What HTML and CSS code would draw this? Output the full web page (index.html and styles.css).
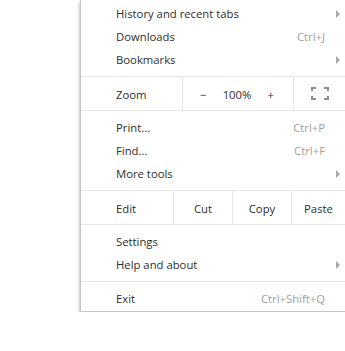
FILE: index.html
```html
<!DOCTYPE html>
<html lang="en">
<head>
    <meta charset="UTF-8">
    <title>Menu</title>
    <link rel="stylesheet" href="styles.css">
</head>
<body>
    <div class="menu">
        <div class="section first">
            <div class="item"><span>History and recent tabs</span><span></span><span class="arrow"></span></div>
            <div class="item"><span>Downloads</span><span class="key">Ctrl+J</span><span></span></div>
            <div class="item"><span>Bookmarks</span><span></span><span class="arrow"></span></div>
        </div>

        <div class="row zoom">
            <div class="label">Zoom</div>
            <div class="cell controls">
                <span>&minus;</span>
                <span>100%</span>
                <span>+</span>
            </div>
            <div class="cell">
                <svg width="18" height="13" viewBox="0 0 18 13">
                    <path d="M1 4V1h4M13 1h4v3M17 9v3h-4M5 12H1V9" fill="none" stroke="#8f8f8f" stroke-width="2"/>
                </svg>
            </div>
        </div>

        <div class="section">
            <div class="item"><span>Print...</span><span class="key">Ctrl+P</span><span></span></div>
            <div class="item"><span>Find...</span><span class="key">Ctrl+F</span><span></span></div>
            <div class="item"><span>More tools</span><span></span><span class="arrow"></span></div>
        </div>

        <div class="row edit">
            <div class="label">Edit</div>
            <div class="cell">Cut</div>
            <div class="cell">Copy</div>
            <div class="cell">Paste</div>
        </div>

        <div class="section">
            <div class="item"><span>Settings</span><span></span><span></span></div>
            <div class="item"><span>Help and about</span><span></span><span class="arrow"></span></div>
        </div>

        <div class="section last">
            <div class="item"><span>Exit</span><span class="key">Ctrl+Shift+Q</span><span></span></div>
        </div>
    </div>
</body>
</html>
```

FILE: styles.css
```css
body {
    margin: 0;
    background-color: #fff;
    font-family: "Open Sans", "Noto Sans", sans-serif;
    font-size: 11.3px;
    color: #2e2e2e;
    overflow: hidden;
}

.menu {
    margin-left: 80px;
    width: 264px;
    background-color: #fff;
    border-left: 1px solid #c4c4c4;
    border-bottom: 1px solid #c4c4c4;
    box-shadow: 0px 2px 3px rgba(0, 0, 0, 0.4);
}

.section {
    padding: 5px 0;
    border-top: 1px solid #e6e6e6;
}
.section.first {
    padding: 2px 0 5px;
    border-top: none;
}
.section.last {
    padding: 5px 0 1px;
}

.item {
    display: grid;
    grid-template-columns: 1fr auto 20px;
    align-items: center;
    height: 23px;
    padding-left: 35px;
}
.key {
    color: #a0a0a0;
}
.arrow {
    width: 0;
    height: 0;
    margin-left: 11px;
    border-top: 4px solid transparent;
    border-bottom: 4px solid transparent;
    border-left: 4px solid #a8a8a8;
}

.row {
    display: flex;
    height: 33px;
    border-top: 1px solid #e6e6e6;
}
.row .label {
    display: flex;
    align-items: center;
    padding: 2px 0 0 35px;
}
.row .cell {
    display: flex;
    align-items: center;
    justify-content: center;
    padding-top: 2px;
    border-left: 1px solid #e6e6e6;
}

.zoom .label {
    width: 66px;
}
.zoom .controls {
    width: 111px;
    justify-content: space-between;
    padding: 1px 19px 0 17px;
    box-sizing: border-box;
}
.zoom .cell:last-child {
    flex: 1;
    padding-top: 0;
}

.edit .label {
    width: 57px;
}
.edit .cell {
    width: 58px;
}
.edit .cell:last-child {
    flex: 1;
}
```
